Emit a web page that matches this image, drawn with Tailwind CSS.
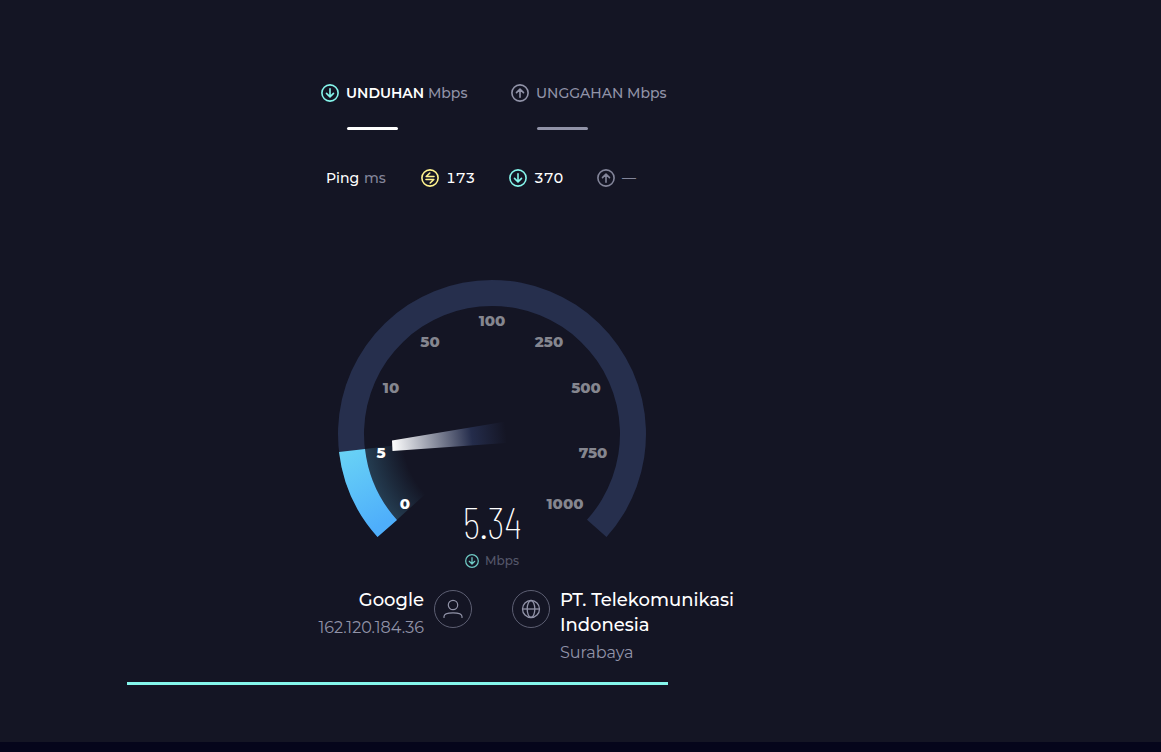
<!DOCTYPE html>
<html lang="id">
<head>
<meta charset="utf-8">
<meta name="viewport" content="width=device-width, initial-scale=1">
<title>Speedtest</title>
<script src="https://cdn.jsdelivr.net/npm/@tailwindcss/browser@4"></script>
</head>
<body class="flex min-h-screen flex-col bg-[#141524] font-['Montserrat','Inter',sans-serif] text-white">
<svg class="hidden" aria-hidden="true">
  <symbol id="down" viewBox="0 0 18 18"><g fill="none" stroke="currentColor" stroke-width="1.6"><circle cx="9" cy="9" r="8.1"/><path d="M9 4.800v8M5.500 9.400 9 12.900l3.500-3.500" stroke-linecap="round" stroke-linejoin="round"/></g></symbol>
  <symbol id="up" viewBox="0 0 18 18"><g fill="none" stroke="currentColor" stroke-width="1.6"><circle cx="9" cy="9" r="8.100"/><path d="M9 13.200v-8M5.500 8.600 9 5.100l3.500 3.500" stroke-linecap="round" stroke-linejoin="round"/></g></symbol>
  <symbol id="idle" viewBox="0 0 18 18"><g fill="none" stroke="currentColor" stroke-width="1.6"><circle cx="9" cy="9" r="8.100"/><path d="M13 7.500H5.200L8.800 4M5 10.500H12.800L9.200 14" stroke-linecap="round" stroke-linejoin="round"/></g></symbol>
</svg>

<main class="flex-1">
  <section class="ml-[321px] flex pt-[83px] text-sm leading-5">
    <div class="w-[190px]">
      <div class="flex items-center gap-[7px]">
        <svg class="size-[18px] text-[#85f5eb]"><use href="#down"/></svg>
        <p class="whitespace-nowrap font-medium text-[#9193a8]"><strong class="font-semibold text-white">UNDUHAN</strong> Mbps</p>
      </div>
      <div class="mt-6 ml-[26px] h-[3px] w-[51px] rounded-full bg-white"></div>
    </div>
    <div>
      <div class="flex items-center gap-[7px] text-[#9193a8]">
        <svg class="size-[18px]"><use href="#up"/></svg>
        <p class="whitespace-nowrap font-medium">UNGGAHAN Mbps</p>
      </div>
      <div class="mt-6 ml-[26px] h-[3px] w-[51px] rounded-full bg-[#9193a8]"></div>
    </div>
  </section>

  <section class="mt-[38px] ml-[326px] flex items-center text-sm leading-5 font-medium tabular-nums">
    <p class="w-[95px]">Ping <span class="ml-px text-[#83859a]">ms</span></p>
    <p class="flex w-[88px] items-center gap-[7px]"><svg class="size-[18px] text-[#fff38e]"><use href="#idle"/></svg>173</p>
    <p class="flex w-[88px] items-center gap-[7px]"><svg class="size-[18px] text-[#85f5eb]"><use href="#down"/></svg>370</p>
    <p class="flex items-center gap-[7px] text-[#83859a]"><svg class="size-[18px]"><use href="#up"/></svg>—</p>
  </section>

  <section class="mt-[92px] ml-[338px] w-[308px]">
    <svg class="block w-full overflow-visible" viewBox="338 280 308 264" role="img" aria-label="5.34 Mbps">
      <defs>
        <linearGradient id="fill" x1="0" y1="0" x2=".35" y2="1"><stop stop-color="#6ad4f5"/><stop offset="1" stop-color="#4eaefb"/></linearGradient>
        <linearGradient id="needle" gradientUnits="userSpaceOnUse" x1="392" y1="446" x2="506" y2="432"><stop stop-color="#fff"/><stop offset=".7" stop-color="#242c4b"/><stop offset="1" stop-color="#141524"/></linearGradient>
        <radialGradient id="glow" gradientUnits="userSpaceOnUse" cx="492" cy="434" r="128"><stop offset=".7" stop-color="#5ec8f0" stop-opacity="0"/><stop offset="1" stop-color="#5ec8f0" stop-opacity=".22"/></radialGradient>
      </defs>
      <path fill="#262f4d" d="M377.500 537A154 154 0 1 1 606.500 537L587 519.700A128 128 0 1 0 397 519.700Z"/>
      <path fill="url(#glow)" d="M492 434 365 449A128 128 0 0 0 397 519.700Z"/>
      <path fill="url(#fill)" d="M339 452 365 449A128 128 0 0 0 397 520L377.500 537A154 154 0 0 1 339 452Z"/>
      <path fill="url(#needle)" d="M392 440.500 506 421.500V443L392.500 451Z"/>
      <g class="text-[15px] font-extrabold" fill="#85868f" text-anchor="middle">
        <text x="405" y="509" fill="#fff">0</text>
        <text x="381" y="458" fill="#fff">5</text>
        <text x="391" y="393">10</text>
        <text x="430" y="347">50</text>
        <text x="492" y="326">100</text>
        <text x="549" y="347">250</text>
        <text x="586" y="393">500</text>
        <text x="593" y="458">750</text>
        <text x="565" y="509">1000</text>
      </g>
      <text class="font-['Barlow_Condensed','Roboto_Condensed',sans-serif] text-[44px] font-extralight" x="492" y="539" fill="#fff" text-anchor="middle">5.34</text>
    </svg>
    <p class="mt-[9px] flex items-center justify-center gap-[6px] text-xs leading-4 font-medium text-[#55576a]"><svg class="size-[14px] text-[#6fcac5]"><use href="#down"/></svg>Mbps</p>
  </section>

  <section class="mt-[21px] flex items-start">
    <div class="flex w-[472px] justify-end gap-[10px]">
      <div class="text-right">
        <p class="-mt-0.5 text-lg leading-6 font-medium">Google</p>
        <p class="mt-1 text-base leading-6 text-[#9193a8]">162.120.184.36</p>
      </div>
      <svg class="size-[38px]" viewBox="0 0 38 38" fill="none" stroke="#9193a8"><circle cx="19" cy="19" r="18.500" stroke="#5d5f73"/><circle cx="19" cy="15" r="4.700" stroke-width="1.200"/><path stroke-width="1.200" stroke-linecap="round" d="M10 27.500V26.500C10 23.800 12.500 22.800 19 22.800S28 23.800 28 26.500V27.500"/></svg>
    </div>
    <div class="ml-10 flex gap-[10px]">
      <svg class="size-[38px] shrink-0" viewBox="0 0 38 38" fill="none" stroke="#9193a8"><circle cx="19" cy="19" r="18.500" stroke="#5d5f73"/><g stroke-width="1.300"><circle cx="19" cy="19" r="8.500"/><ellipse cx="19" cy="19" rx="3.800" ry="8.500"/><path d="M10.500 19H27.500"/></g></svg>
      <div class="w-[190px]">
        <p class="-mt-0.5 text-lg leading-[25px] font-medium">PT. Telekomunikasi Indonesia</p>
        <p class="mt-[3px] text-base leading-6 text-[#9193a8]">Surabaya</p>
      </div>
    </div>
  </section>

  <div class="mt-[17px] ml-[127px] h-[3px] w-[541px] bg-[#85f5eb]" role="progressbar" aria-label="Progress"></div>
</main>
<footer class="h-[10px] bg-[#05051b]"></footer>
</body>
</html>
